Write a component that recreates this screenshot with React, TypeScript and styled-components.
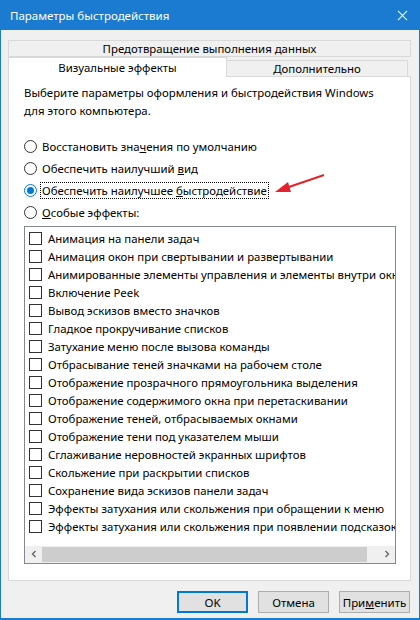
import React from 'react';
import styled, { createGlobalStyle } from 'styled-components';

const GlobalStyle = createGlobalStyle`
  html, body {
    margin: 0;
    padding: 0;
    background: #ffffff;
  }
  body {
    font-family: 'Noto Sans', 'Liberation Sans', Arial, sans-serif;
    font-size: 11.4px;
    color: #000;
  }
`;

const OPTIONS = [
  { id: 'restore', before: 'Восстановить зна', key: 'ч', after: 'ения по умолчанию' },
  { id: 'look', before: 'Обеспечить наилучший ', key: 'в', after: 'ид' },
  { id: 'speed', before: 'Обеспечить наилучшее ', key: 'б', after: 'ыстродействие' },
  { id: 'custom', before: '', key: 'О', after: 'собые эффекты:' },
];

const EFFECTS = [
  'Анимация на панели задач',
  'Анимация окон при свертывании и развертывании',
  'Анимированные элементы управления и элементы внутри окна',
  'Включение Peek',
  'Вывод эскизов вместо значков',
  'Гладкое прокручивание списков',
  'Затухание меню после вызова команды',
  'Отбрасывание теней значками на рабочем столе',
  'Отображение прозрачного прямоугольника выделения',
  'Отображение содержимого окна при перетаскивании',
  'Отображение теней, отбрасываемых окнами',
  'Отображение тени под указателем мыши',
  'Сглаживание неровностей экранных шрифтов',
  'Скольжение при раскрытии списков',
  'Сохранение вида эскизов панели задач',
  'Эффекты затухания или скольжения при обращении к меню',
  'Эффекты затухания или скольжения при появлении подсказок',
];

export default function App() {
  const selected = 'speed';

  return (
    <>
      <GlobalStyle />
      <Window>
        <TitleBar>
          <Title>Параметры быстродействия</Title>
          <CloseIcon viewBox="0 0 12 12">
            <path d="M1 1 L11 11 M11 1 L1 11" stroke="#fff" strokeWidth="1.1" fill="none" />
          </CloseIcon>
        </TitleBar>

        <Body>
          <TabStrip>
            <TabRow>
              <Tab full>Предотвращение выполнения данных</Tab>
            </TabRow>
            <TabRow>
              <Tab active>Визуальные эффекты</Tab>
              <Tab>Дополнительно</Tab>
            </TabRow>
          </TabStrip>

          <Panel>
            <Intro>
              Выберите параметры оформления и быстродействия Windows
              <br />
              для этого компьютера.
            </Intro>

            <RadioGroup>
              {OPTIONS.map((o) => (
                <RadioRow key={o.id}>
                  <Radio checked={o.id === selected} />
                  <RadioLabel focused={o.id === selected}>
                    {o.before}
                    <u>{o.key}</u>
                    {o.after}
                  </RadioLabel>
                  {o.id === selected && (
                    <Pointer viewBox="0 0 52 22">
                      <path d="M50 2 L12 15" stroke="#e4222b" strokeWidth="2" fill="none" />
                      <path d="M1 19 L14 9 L17 19 Z" fill="#e4222b" />
                    </Pointer>
                  )}
                </RadioRow>
              ))}
            </RadioGroup>

            <ListBox>
              <ListItems>
                {EFFECTS.map((e) => (
                  <ListItem key={e}>
                    <CheckBox />
                    <ItemText>{e}</ItemText>
                  </ListItem>
                ))}
              </ListItems>
              <HScroll>
                <ScrollArrow>
                  <svg width="8" height="8" viewBox="0 0 8 8">
                    <path d="M5.5 1 L2.5 4 L5.5 7" stroke="#606060" strokeWidth="1.3" fill="none" />
                  </svg>
                </ScrollArrow>
                <Track>
                  <Thumb />
                </Track>
                <ScrollArrow>
                  <svg width="8" height="8" viewBox="0 0 8 8">
                    <path d="M2.5 1 L5.5 4 L2.5 7" stroke="#606060" strokeWidth="1.3" fill="none" />
                  </svg>
                </ScrollArrow>
              </HScroll>
            </ListBox>
          </Panel>

          <ButtonBar>
            <Button primary>OK</Button>
            <Button>Отмена</Button>
            <Button>
              При<u>м</u>енить
            </Button>
          </ButtonBar>
        </Body>
      </Window>
    </>
  );
}

const Window = styled.div`
  width: 420px;
  height: 620px;
  box-sizing: border-box;
  border: 1px solid #1a7bd1;
  border-top: none;
  border-bottom-width: 2px;
  background: #f0f0f0;
  display: flex;
  flex-direction: column;
`;

const TitleBar = styled.div`
  height: 30px;
  background: #1a7bd1;
  display: flex;
  align-items: center;
  justify-content: space-between;
  padding: 0 11px 0 9px;
  flex-shrink: 0;
`;

const Title = styled.span`
  color: #fff;
  font-size: 11.5px;
`;

const CloseIcon = styled.svg`
  width: 11px;
  height: 11px;
`;

const Body = styled.div`
  flex: 1;
  display: flex;
  flex-direction: column;
  padding: 10px 8px 0 7px;
`;

const TabStrip = styled.div`
  display: flex;
  flex-direction: column;
  position: relative;
  z-index: 1;
  margin-bottom: -1px;
`;

const TabRow = styled.div`
  display: flex;
  align-items: flex-end;
`;

const Tab = styled.div<{ active?: boolean; full?: boolean }>`
  box-sizing: border-box;
  flex: ${(p) => (p.full ? '1' : p.active ? '0 0 219px' : '0 0 182px')};
  height: ${(p) => (p.active ? '20px' : '17px')};
  margin-left: ${(p) => (p.active || p.full ? '0' : '-1px')};
  background: ${(p) => (p.active ? '#ffffff' : '#f0f0f0')};
  border: 1px solid #d9d9d9;
  border-bottom: ${(p) => (p.active ? 'none' : '1px solid #d9d9d9')};
  display: flex;
  align-items: center;
  justify-content: center;
  white-space: nowrap;
  padding-top: ${(p) => (p.active ? '0' : '1px')};
  line-height: 1;
`;

const Panel = styled.div`
  height: 505px;
  box-sizing: border-box;
  background: #fff;
  border: 1px solid #d9d9d9;
  padding: 7px 14px 0 15px;
  display: flex;
  flex-direction: column;
`;

const Intro = styled.p`
  margin: 0;
  line-height: 18px;
`;

const RadioGroup = styled.div`
  margin-top: 17px;
  display: flex;
  flex-direction: column;
  gap: 4.3px;
`;

const RadioRow = styled.div`
  display: flex;
  align-items: center;
  height: 18px;
  gap: 3px;
`;

const Radio = styled.span<{ checked?: boolean }>`
  box-sizing: border-box;
  width: 13px;
  height: 13px;
  border-radius: 50%;
  border: 1px solid ${(p) => (p.checked ? '#0078d7' : '#333333')};
  background: #fff;
  display: flex;
  align-items: center;
  justify-content: center;
  &::after {
    content: '';
    width: 7px;
    height: 7px;
    border-radius: 50%;
    background: ${(p) => (p.checked ? '#0078d7' : 'transparent')};
  }
`;

const RadioLabel = styled.span<{ focused?: boolean }>`
  white-space: nowrap;
  padding: 0 1px;
  border: 1px dotted ${(p) => (p.focused ? '#000' : 'transparent')};
  line-height: 15px;
`;

const Pointer = styled.svg`
  width: 52px;
  height: 22px;
  margin-left: 2px;
  margin-top: -14px;
`;

const ListBox = styled.div`
  margin-top: 4px;
  height: 338px;
  box-sizing: border-box;
  border: 1px solid #828790;
  display: flex;
  flex-direction: column;
  overflow: hidden;
`;

const ListItems = styled.div`
  flex: 1;
  padding: 3px 0 0 4px;
  display: flex;
  flex-direction: column;
`;

const ListItem = styled.div`
  height: 18px;
  display: flex;
  align-items: center;
  gap: 6px;
  white-space: nowrap;
`;

const CheckBox = styled.span`
  box-sizing: border-box;
  flex-shrink: 0;
  width: 13px;
  height: 13px;
  border: 1px solid #333333;
  background: #fff;
`;

const ItemText = styled.span`
  line-height: 18px;
`;

const HScroll = styled.div`
  height: 17px;
  display: flex;
  background: #f0f0f0;
  flex-shrink: 0;
`;

const ScrollArrow = styled.div`
  width: 17px;
  display: flex;
  align-items: center;
  justify-content: center;
`;

const Track = styled.div`
  flex: 1;
  display: flex;
  align-items: stretch;
  padding: 1px 0;
`;

const Thumb = styled.div`
  flex: 0 0 325px;
  background: #cdcdcd;
`;

const ButtonBar = styled.div`
  display: flex;
  justify-content: flex-end;
  gap: 10px;
  padding: 10px 1px 0 0;
`;

const Button = styled.button<{ primary?: boolean }>`
  box-sizing: border-box;
  width: 71px;
  height: 22px;
  font-family: inherit;
  font-size: 11.5px;
  color: #000;
  background: #e1e1e1;
  border: ${(p) => (p.primary ? '2px solid #0078d7' : '1px solid #adadad')};
  padding: 0;
`;
